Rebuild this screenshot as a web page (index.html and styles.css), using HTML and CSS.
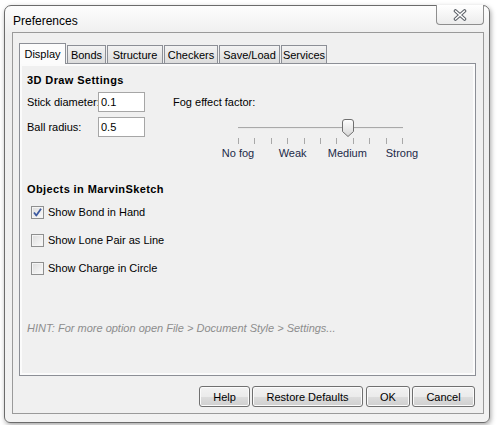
FILE: index.html
```html
<!DOCTYPE html>
<html>
<head>
<meta charset="utf-8">
<title>Preferences</title>
<link rel="stylesheet" href="styles.css">
</head>
<body>
<div class="window">
  <div class="titlebar">
    <span class="title">Preferences</span>
    <div class="close">
      <svg width="14" height="12" viewBox="0 0 14 12">
        <path d="M2.5 2 L11.5 10 M11.5 2 L2.5 10" stroke="#5a5f66" stroke-width="3.6" stroke-linecap="round" fill="none"/>
        <path d="M2.5 2 L11.5 10 M11.5 2 L2.5 10" stroke="#ffffff" stroke-width="1.6" stroke-linecap="round" fill="none"/>
      </svg>
    </div>
  </div>
  <div class="client">
    <div class="tabs">
      <div class="tab active w-display">Display</div>
      <div class="tab w-bonds">Bonds</div>
      <div class="tab w-structure">Structure</div>
      <div class="tab w-checkers">Checkers</div>
      <div class="tab w-saveload">Save/Load</div>
      <div class="tab w-services">Services</div>
    </div>
    <div class="panel">
      <div class="panel-body">
        <div class="heading">3D Draw Settings</div>
        <div class="draw-settings">
          <div class="fields">
            <div class="field"><span class="label">Stick diameter:</span><div class="input">0.1</div></div>
            <div class="field"><span class="label">Ball radius:</span><div class="input">0.5</div></div>
          </div>
          <div class="fog">
            <div class="fog-label">Fog effect factor:</div>
            <div class="slider">
              <div class="track-row">
                <div class="track"></div>
                <div class="thumb">
                  <svg width="12" height="18" viewBox="0 0 12 18">
                    <defs>
                      <linearGradient id="tg" x1="0" y1="0" x2="0" y2="1">
                        <stop offset="0" stop-color="#ffffff"/>
                        <stop offset="1" stop-color="#d6d6d6"/>
                      </linearGradient>
                    </defs>
                    <path d="M0.5 3 Q0.5 0.5 3 0.5 H9 Q11.5 0.5 11.5 3 V12.5 L6 17.5 L0.5 12.5 Z" fill="url(#tg)" stroke="#6f6f6f" stroke-width="1"/>
                  </svg>
                </div>
              </div>
              <div class="ticks">
                <span></span><span></span><span></span><span></span><span></span><span></span><span></span><span></span><span></span><span></span><span></span>
              </div>
              <div class="slider-labels">
                <span>No fog</span><span>Weak</span><span>Medium</span><span>Strong</span>
              </div>
            </div>
          </div>
        </div>
        <div class="heading heading-objects">Objects in MarvinSketch</div>
        <div class="checks">
          <div class="check-row">
            <span class="checkbox">
              <svg width="11" height="11" viewBox="0 0 11 11"><path d="M2 5.5 L4.3 8.5 L9 1.8" stroke="#3d5aa0" stroke-width="1.8" fill="none" stroke-linejoin="round"/></svg>
            </span>
            <span>Show Bond in Hand</span>
          </div>
          <div class="check-row"><span class="checkbox"></span><span>Show Lone Pair as Line</span></div>
          <div class="check-row"><span class="checkbox"></span><span>Show Charge in Circle</span></div>
        </div>
        <div class="hint">HINT: For more option open File &gt; Document Style &gt; Settings...</div>
      </div>
    </div>
    <div class="buttons">
      <div class="btn w-help">Help</div>
      <div class="btn w-restore">Restore Defaults</div>
      <div class="btn w-ok">OK</div>
      <div class="btn w-cancel">Cancel</div>
    </div>
  </div>
</div>
</body>
</html>
```

FILE: styles.css
```css
* { box-sizing: border-box; }

html, body {
  margin: 0;
  padding: 0;
  background: #ffffff;
}

body {
  font-family: "Liberation Sans", Arial, sans-serif;
  font-size: 11px;
  color: #000;
  width: 498px;
  height: 425px;
  overflow: hidden;
}

.window {
  margin: 5px 0 0 4px;
  width: 486px;
  height: 418px;
  border: 1px solid #6b6b6b;
  border-radius: 7px 7px 6px 6px;
  background: linear-gradient(to bottom, #fdfdfd 0px, #eeeeee 30px, #f2f2f2 100%);
  box-shadow: 1px 2px 5px rgba(0, 0, 0, 0.35);
  padding: 0 5px 8px 7px;
  display: flex;
  flex-direction: column;
}

.titlebar {
  height: 26px;
  display: flex;
  align-items: flex-start;
  flex-shrink: 0;
}

.title {
  font-size: 12px;
  line-height: 14px;
  padding: 8px 0 0 1px;
}

.close {
  margin-left: auto;
  margin-top: -1px;
  width: 48px;
  height: 20px;
  border: 1px solid #8e8e8e;
  border-top: none;
  border-radius: 0 0 4px 4px;
  background: linear-gradient(to bottom, #ffffff, #ececec);
  display: flex;
  align-items: center;
  justify-content: center;
}

.client {
  flex: 1;
  border: 1px solid #9a9a9a;
  background: #f0f0f0;
  padding: 10px 7px 6px 6px;
  display: flex;
  flex-direction: column;
}

.tabs {
  height: 20px;
  display: flex;
  align-items: flex-end;
  gap: 1px;
  position: relative;
  z-index: 1;
}

.tab {
  height: 18px;
  border: 1px solid #8c8f96;
  border-bottom: none;
  background: linear-gradient(to bottom, #f3f3f3, #dcdcdc);
  display: flex;
  align-items: center;
  justify-content: center;
  line-height: 14px;
  padding-top: 1px;
}

.tab.active {
  height: 21px;
  margin-bottom: -1px;
  background: #fcfcfc;
  padding-top: 0;
  padding-bottom: 1px;
}

.w-display { width: 47px; }
.w-bonds { width: 39px; }
.w-structure { width: 56px; }
.w-checkers { width: 54px; }
.w-saveload { width: 61px; }
.w-services { width: 46px; }

.panel {
  height: 313px;
  border: 1px solid #8c8f96;
  background: #fbfbfb;
  padding: 2px;
  flex-shrink: 0;
}

.panel-body {
  height: 100%;
  background: #f0f0f0;
  padding: 7px 0 0 5px;
}

.heading {
  font-weight: bold;
  line-height: 14px;
  letter-spacing: 0.4px;
}

.draw-settings {
  display: flex;
  margin-top: 5px;
}

.fields {
  display: flex;
  flex-direction: column;
  gap: 5px;
  width: 146px;
}

.field {
  display: flex;
  align-items: center;
}

.label {
  width: 71px;
  white-space: nowrap;
}

.input {
  width: 47px;
  height: 20px;
  border: 1px solid #a6a6a6;
  background: #fff;
  line-height: 18px;
  padding-left: 2px;
}

.fog {
  display: flex;
  flex-direction: column;
}

.fog-label {
  line-height: 20px;
  height: 20px;
}

.slider {
  margin-top: 7px;
  margin-left: 38px;
  width: 218px;
}

.track-row {
  position: relative;
  height: 18px;
  padding: 8px 26px 0 27px;
}

.track {
  height: 2px;
  border-top: 1px solid #a9a9a9;
  border-bottom: 1px solid #e9e9e9;
}

.thumb {
  position: absolute;
  top: 0;
  left: 131px;
  width: 12px;
  height: 18px;
}

.thumb svg { display: block; }

.ticks {
  margin-top: 1px;
  height: 6px;
  padding: 0 26px 0 27px;
  display: flex;
  justify-content: space-between;
}

.ticks span {
  width: 1px;
  height: 6px;
  background: #a8a8a8;
}

.slider-labels {
  margin-top: 2px;
  display: flex;
  justify-content: space-between;
  line-height: 14px;
  color: #1c2a48;
}

.slider-labels span {
  width: 54px;
  text-align: center;
  white-space: nowrap;
}

.heading-objects {
  margin-top: 22px;
}

.checks {
  margin-top: 6px;
  display: flex;
  flex-direction: column;
  gap: 8px;
}

.check-row {
  height: 20px;
  display: flex;
  align-items: center;
  padding-left: 4px;
  gap: 4px;
}

.checkbox {
  width: 13px;
  height: 13px;
  border: 1px solid #8e8f8f;
  background: linear-gradient(135deg, #dcdcdc, #fbfbfb);
  box-shadow: inset 0 0 0 1px #f4f4f4;
  display: flex;
  align-items: center;
  justify-content: center;
}

.checkbox svg { display: block; }

.hint {
  margin-top: 43px;
  font-style: italic;
  color: #8d8d8d;
  line-height: 14px;
}

.buttons {
  margin-top: 10px;
  height: 21px;
  display: flex;
  justify-content: flex-end;
  gap: 2px;
  padding-right: 1px;
}

.btn {
  height: 21px;
  border: 1px solid #707070;
  border-radius: 3px;
  background: linear-gradient(to bottom, #f2f2f2 0%, #ebebeb 50%, #dddddd 50%, #cfcfcf 100%);
  box-shadow: inset 0 0 0 1px #fbfbfb;
  display: flex;
  align-items: center;
  justify-content: center;
  line-height: 14px;
}

.w-ok { margin-left: 1px; }

.w-help { width: 51px; }
.w-restore { width: 111px; }
.w-ok { width: 44px; }
.w-cancel { width: 63px; }
```
